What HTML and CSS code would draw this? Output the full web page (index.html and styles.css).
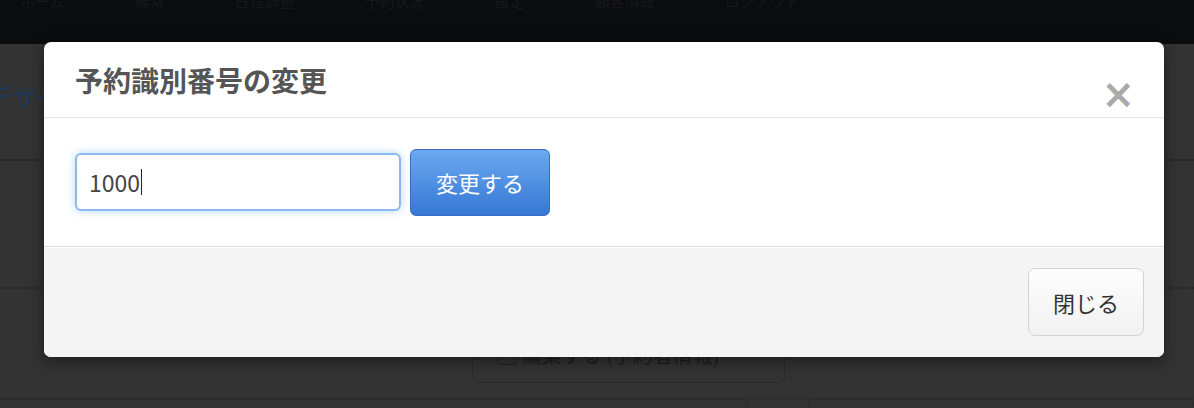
FILE: index.html
```html
<!DOCTYPE html>
<html lang="ja">
<head>
    <meta charset="UTF-8">
    <title>予約識別番号の変更</title>
    <link rel="stylesheet" href="styles.css">
</head>
<body>
    <div class="navbar">
        <span>ホーム</span><span>検索</span><span>日程調整</span><span>予約状況</span><span>設定</span><span>顧客情報</span><span>ログアウト</span>
    </div>
    <div class="page">
        <div class="page-head">
            <div class="crumb">デザイン</div>
        </div>
        <div class="page-body">
            <div class="dotted"></div>
            <div class="edit-row">
                <div class="edit-btn">▢ 編集する (予約者情報)</div>
            </div>
        </div>
        <div class="page-foot">
            <div class="foot-box left-box"></div>
            <div class="foot-box right-box"></div>
        </div>
    </div>

    <div class="modal">
        <div class="modal-header">
            <h3>予約識別番号の変更</h3>
            <span class="close">×</span>
        </div>
        <div class="modal-body">
            <div class="field">1000<span class="caret"></span></div>
            <button class="btn-primary">変更する</button>
        </div>
        <div class="modal-footer">
            <button class="btn">閉じる</button>
        </div>
    </div>
</body>
</html>
```

FILE: styles.css
```css
body {
    margin: 0;
    background: #333333;
    font-family: "Noto Sans CJK JP", "Noto Sans", sans-serif;
    width: 1194px;
    height: 408px;
    overflow: hidden;
    position: relative;
}
.navbar {
    height: 44px;
    background: #0b0c0e;
    display: flex;
    gap: 70px;
    padding-left: 20px;
    color: #17181c;
    font-size: 15px;
    line-height: 2px;
    overflow: hidden;
}
.page {
    background: #333333;
}
.page-head {
    height: 115px;
    border-bottom: 2px solid #2a2a2a;
    display: flex;
    align-items: center;
}
.crumb {
    color: #1d3a5f;
    font-size: 24px;
    margin-left: -12px;
    margin-top: -12px;
}
.page-body {
    padding-top: 126px;
}
.dotted {
    border-top: 2px dotted #262626;
}
.edit-row {
    padding: 38px 0 0 472px;
    height: 60px;
}
.edit-btn {
    width: 313px;
    height: 58px;
    margin-top: -2px;
    border: 1px solid #2a2a2a;
    border-radius: 6px;
    color: #1e1e1e;
    font-size: 20px;
    line-height: 58px;
    padding-left: 24px;
    box-sizing: border-box;
}
.page-foot {
    border-top: 1px solid #2b2b2b;
    margin-top: 11px;
    display: flex;
    gap: 60px;
}
.foot-box {
    height: 10px;
    border: 1px solid #2b2b2b;
    border-bottom: none;
    border-radius: 6px 6px 0 0;
}
.left-box {
    width: 786px;
    margin-left: -10px;
}
.right-box {
    width: 400px;
}

.modal {
    position: absolute;
    left: 44px;
    top: 42px;
    width: 1120px;
    background: #fff;
    border-radius: 7px;
    box-shadow: 0 4px 16px rgba(0, 0, 0, 0.45);
    overflow: hidden;
}
.modal-header {
    height: 75px;
    border-bottom: 1px solid #e5e5e5;
    display: flex;
    justify-content: space-between;
    padding: 0 29px 0 31px;
}
.modal-header h3 {
    margin: 0;
    font-size: 28px;
    font-weight: bold;
    color: #555;
    line-height: 76px;
}
.close {
    color: #aaa;
    font-size: 40px;
    font-weight: bold;
    font-family: "DejaVu Sans", sans-serif;
    line-height: 104px;
}
.modal-body {
    display: flex;
    align-items: center;
    gap: 9px;
    padding: 30px 31px 30px 31px;
    height: 68px;
}
.field {
    width: 326px;
    height: 58px;
    box-sizing: border-box;
    border: 2px solid #8bb9ee;
    border-radius: 6px;
    box-shadow: 0 0 8px rgba(82, 168, 236, 0.45);
    padding-left: 12px;
    font-size: 23px;
    line-height: 54px;
    color: #444;
    display: flex;
    align-items: center;
}
.caret {
    display: inline-block;
    width: 1px;
    height: 26px;
    background: #222;
    margin-left: 1px;
}
.btn-primary {
    width: 140px;
    height: 67px;
    border: 1px solid #3a6dbd;
    border-radius: 6px;
    background: linear-gradient(#6aaaf0, #3677d4);
    color: #fff;
    font-family: inherit;
    font-size: 22px;
}
.modal-footer {
    border-top: 1px solid #dcdcdc;
    box-shadow: inset 0 1px 0 #fff;
    background: #f4f4f4;
    height: 110px;
    display: flex;
    justify-content: flex-end;
    align-items: center;
    padding-right: 20px;
}
.btn {
    width: 116px;
    height: 68px;
    border: 1px solid #d3d3d3;
    border-radius: 7px;
    background: linear-gradient(#fdfdfd, #f1f1f1);
    color: #333;
    font-family: inherit;
    font-size: 22px;
}
```
